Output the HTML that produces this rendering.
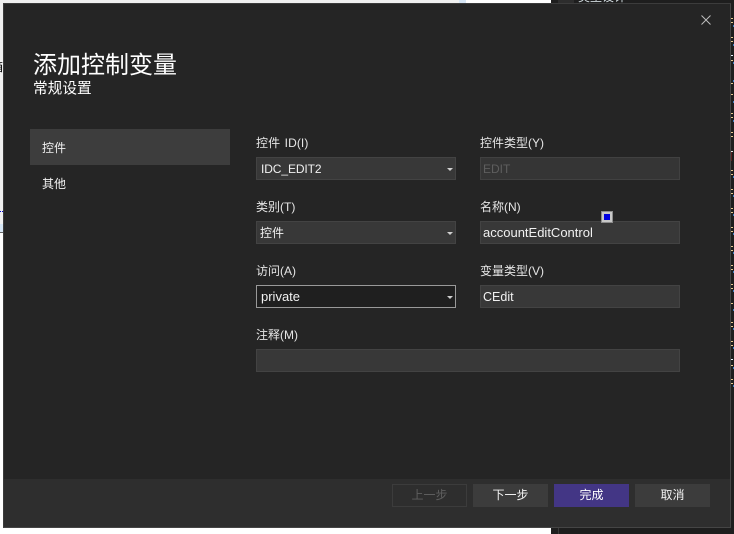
<!DOCTYPE html>
<html lang="zh-CN">
<head>
<meta charset="utf-8">
<title>添加控制变量</title>
<style>
html,body{margin:0;padding:0;width:734px;height:534px;overflow:hidden;background:#fff}
body{position:relative;font-family:"Liberation Sans","Noto Sans CJK SC","WenQuanYi Zen Hei",sans-serif;color:#f0f0f0;font-size:13px}
div,span{position:absolute;box-sizing:border-box;white-space:nowrap}
.lbl{font-size:12px;line-height:16px;height:16px;color:#e6e6e6}
.box{height:23px;background:#383838;border:1px solid #434343;font-size:13px;line-height:21px;padding-left:2px;color:#f1f1f1;width:200px}
.combo{padding-left:4px}
.arrow{width:0;height:0;border-left:3px solid transparent;border-right:3px solid transparent;border-top:3px solid #d0d0d0;left:189.5px;top:10px}
.t12{line-height:23px}
.btn{top:484px;height:23px;width:75px;background:#3c3c3c;text-align:center;font-size:12px;line-height:23px;color:#f1f1f1}
.tick{left:731px;width:2px;height:1px;background:#e8c890}
.tick2{left:733px;width:1px;height:2px;background:#3f7fbf}
</style>
</head>
<body>
<!-- background -->
<div style="left:0;top:0;width:3px;height:232px;background:#f0f0f0"></div>
<div style="left:0;top:211px;width:3px;height:1px;background:repeating-linear-gradient(90deg,#0000d0 0 1px,transparent 1px 2px)"></div>
<div style="left:0;top:224px;width:3px;height:8px;background:#d6e6f5"></div>
<div style="left:0;top:232px;width:3px;height:1px;background:#666"></div>
<div style="left:0;top:60px;width:3px;height:14px;overflow:hidden"><span style="left:-9px;top:-1px;font-size:12px;line-height:16px;color:#000">箱</span></div>
<div style="left:0;top:0;width:459px;height:4px;background:#f0f0f0"></div>
<div style="left:459px;top:0;width:7px;height:4px;background:#d6e6f5"></div>
<div style="left:551px;top:0;width:183px;height:534px;background:#1e1e1e"></div>
<div style="left:558px;top:0;width:16px;height:3px;background:#2d2d2d"></div>
<div style="left:0;top:528px;width:551px;height:6px;background:#fff"></div>
<div style="left:558px;top:528px;width:1px;height:6px;background:#3a3a3a"></div>
<div style="left:578px;top:0;width:48px;height:3px;overflow:hidden;font-size:12px;line-height:12px"><span style="left:0;top:-9px;color:#cfd8dc">类型设计</span></div>

<!-- right edge ticks -->
<div class="tick" style="top:18px"></div><div class="tick" style="top:22px"></div><div class="tick2" style="top:25px"></div>
<div class="tick" style="top:37px"></div><div class="tick" style="top:41px"></div><div class="tick2" style="top:44px"></div>
<div class="tick" style="top:55px;background:#e8f4ff"></div><div class="tick" style="top:60px"></div><div class="tick2" style="top:62px"></div>
<div class="tick2" style="top:80px"></div><div class="tick" style="top:83px"></div>
<div class="tick" style="top:94px"></div><div class="tick2" style="top:101px"></div>
<div class="tick" style="top:113px"></div><div class="tick" style="top:117px"></div><div class="tick2" style="top:120px"></div>
<div class="tick" style="top:132px"></div><div class="tick" style="top:136px"></div>
<div class="tick" style="top:151px;background:#e8e8e8"></div>
<div style="left:731px;top:152px;width:1px;height:9px;background:#5a2020"></div>
<div class="tick" style="top:170px"></div><div class="tick" style="top:174px"></div><div class="tick2" style="top:176px"></div>
<div class="tick" style="top:189px"></div><div class="tick" style="top:193px"></div><div class="tick2" style="top:195px"></div>
<div class="tick" style="top:208px"></div><div class="tick" style="top:212px"></div><div class="tick2" style="top:214px"></div>
<div class="tick" style="top:227px"></div><div class="tick" style="top:231px"></div><div class="tick2" style="top:233px"></div>
<div class="tick" style="top:246px"></div><div class="tick" style="top:250px"></div><div class="tick2" style="top:252px"></div>
<div class="tick" style="top:265px"></div><div class="tick" style="top:269px"></div><div class="tick2" style="top:271px"></div>
<div class="tick" style="top:284px"></div><div class="tick" style="top:288px"></div><div class="tick2" style="top:290px"></div>
<div class="tick" style="top:303px"></div><div class="tick2" style="top:309px"></div>
<div class="tick" style="top:322px"></div><div class="tick" style="top:326px"></div><div class="tick2" style="top:328px"></div>
<div class="tick" style="top:341px"></div><div class="tick" style="top:345px"></div><div class="tick2" style="top:347px"></div>
<div class="tick" style="top:359px;background:#e8f4ff"></div><div class="tick" style="top:365px"></div><div class="tick2" style="top:367px"></div>
<div class="tick" style="top:379px"></div><div class="tick" style="top:383px"></div><div class="tick2" style="top:385px"></div>

<!-- dialog -->
<div style="left:3px;top:3px;width:728px;height:525px;background:#252525;border:1px solid #454545;border-top-color:#3c3c3c;border-left-color:#3c3c3c"></div>
<div style="left:4px;top:479px;width:726px;height:48px;background:#2e2e2e"></div>

<svg style="position:absolute;left:700px;top:14px" width="12" height="12" viewBox="0 0 12 12"><path d="M1.5 1.5L10.5 10.5M10.5 1.5L1.5 10.5" stroke="#bdbdbd" stroke-width="1" fill="none"/></svg>

<div style="left:33px;top:50px;font-size:24px;line-height:32px;color:#fff">添加控制变量</div>
<div style="left:33px;top:80px;font-size:14.67px;line-height:18px;color:#fff">常规设置</div>

<div style="left:30px;top:129px;width:200px;height:36px;background:#3d3d3d"></div>
<div style="left:42px;top:140px;font-size:12px;line-height:16px;color:#f1f1f1">控件</div>
<div style="left:42px;top:176px;font-size:12px;line-height:16px;color:#f1f1f1">其他</div>

<div class="lbl" style="left:256px;top:135px;word-spacing:1px;letter-spacing:.1px">控件 ID(I)</div>
<div class="box combo t12" style="left:256px;top:157px;font-size:12px;letter-spacing:-.1px">IDC_EDIT2<div class="arrow"></div></div>

<div class="lbl" style="left:480px;top:135px">控件类型(Y)</div>
<div class="box t12" style="left:480px;top:157px;color:#5e5e5e;font-size:12px;background:#353535;border-color:#414141">EDIT</div>

<div class="lbl" style="left:256px;top:199px">类别(T)</div>
<div class="box t12" style="left:256px;top:221px;font-size:12px;padding-left:3px">控件<div class="arrow"></div></div>

<div class="lbl" style="left:480px;top:199px">名称(N)</div>
<div class="box" style="left:480px;top:221px">accountEditControl</div>
<div style="left:601px;top:211px;width:12px;height:12px;background:#c8c8c8;border:1px solid #8c8c8c"></div>
<div style="left:604px;top:214px;width:6px;height:6px;background:#0000e0"></div>

<div class="lbl" style="left:256px;top:263px">访问(A)</div>
<div class="box combo" style="left:256px;top:285px;background:#1f1f1f;border-color:#999">private<div class="arrow"></div></div>

<div class="lbl" style="left:480px;top:263px">变量类型(V)</div>
<div class="box t12" style="left:480px;top:285px;font-size:12.5px">CEdit</div>

<div class="lbl" style="left:256px;top:327px">注释(M)</div>
<div class="box" style="left:256px;top:349px;width:424px"></div>

<div class="btn" style="left:392px;background:#2e2e2e;border:1px solid #3c3c3c;line-height:21px;color:#5e5e5e">上一步</div>
<div class="btn" style="left:473px">下一步</div>
<div class="btn" style="left:554px;background:#433685;color:#fff">完成</div>
<div class="btn" style="left:635px">取消</div>
</body>
</html>
